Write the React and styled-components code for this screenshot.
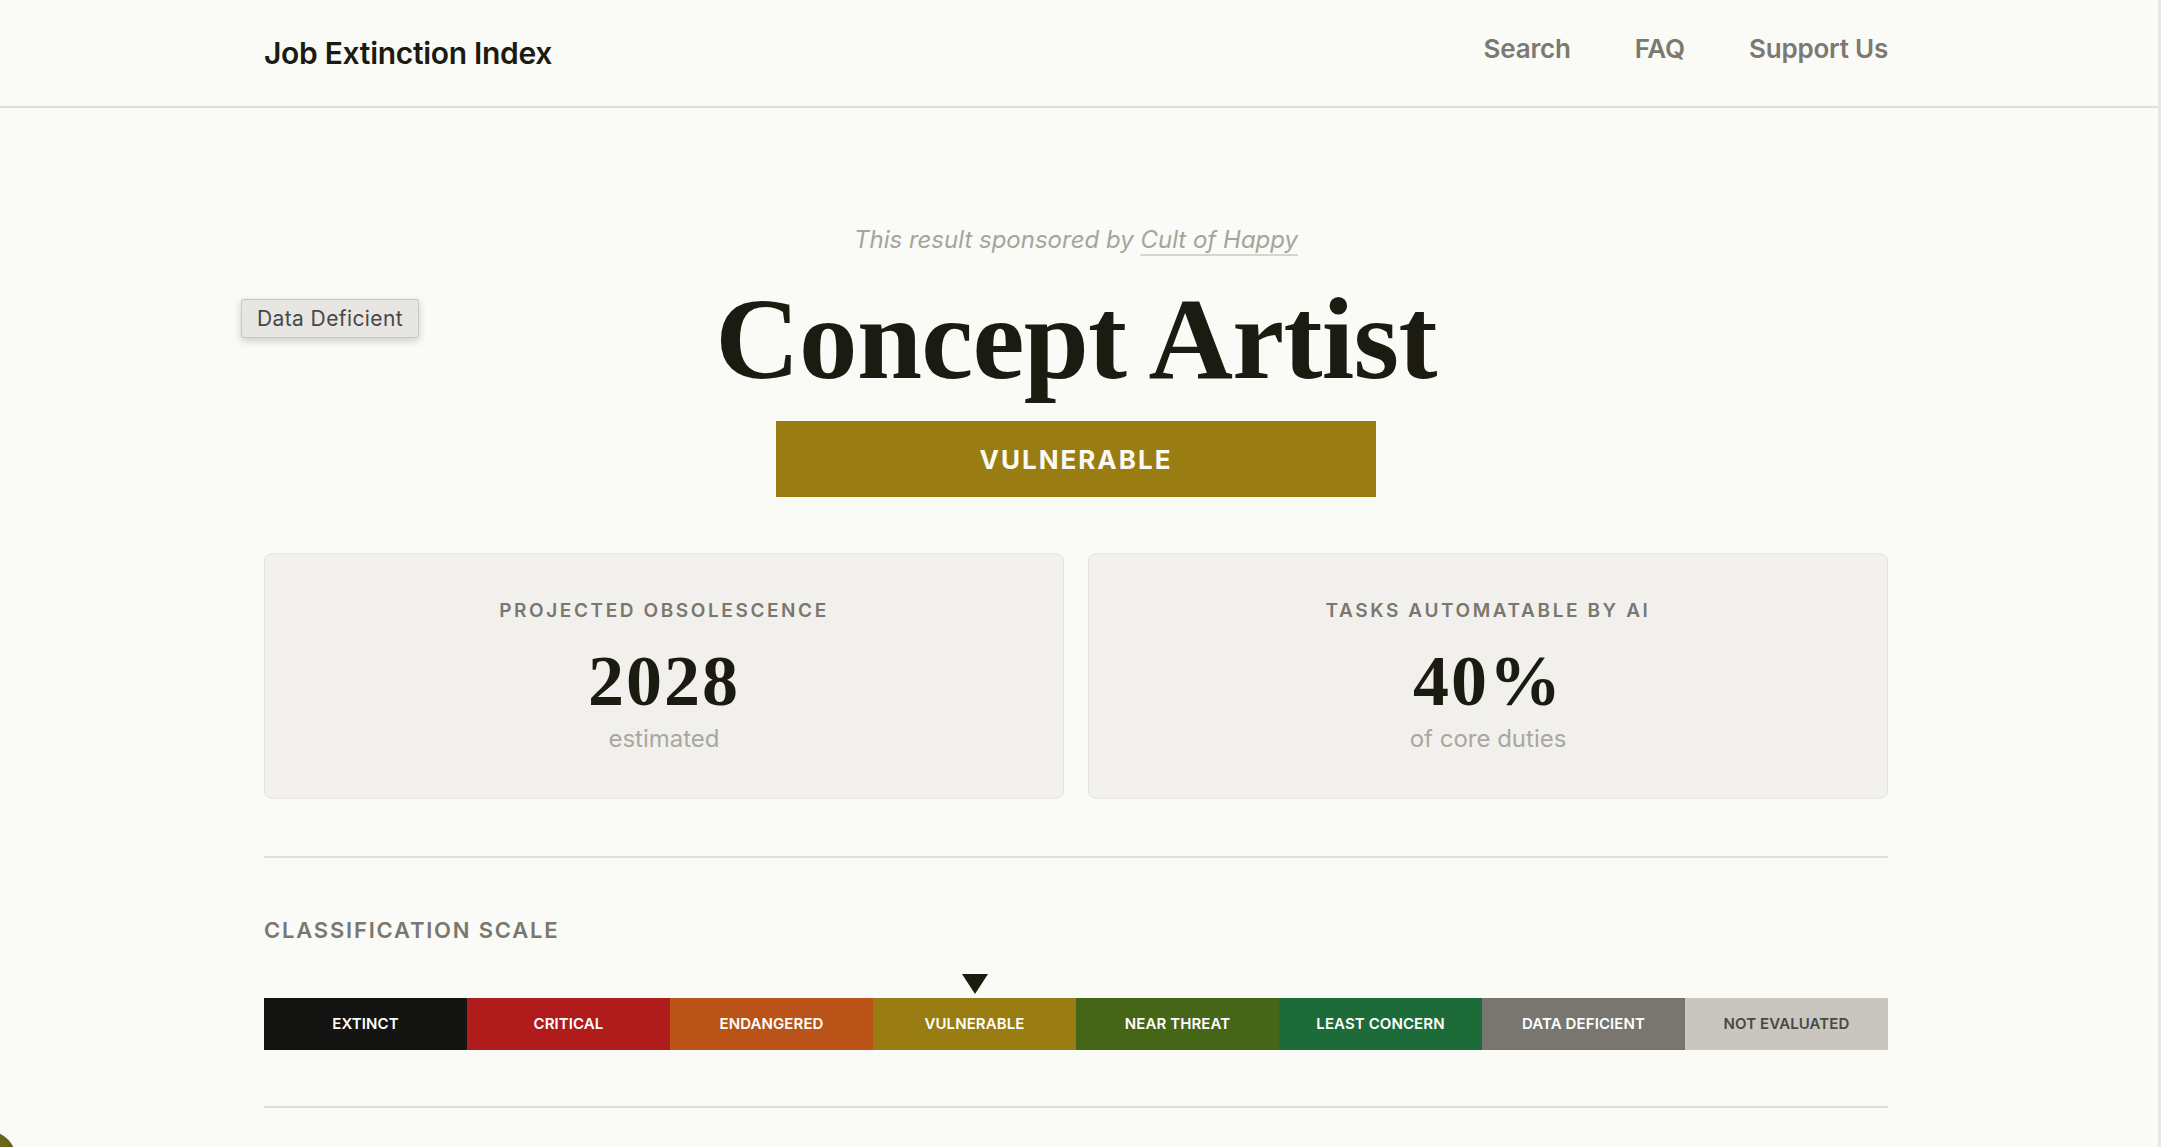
import React from 'react';
import styled, { createGlobalStyle } from 'styled-components';

const GlobalStyle = createGlobalStyle`
  html, body, #root {
    margin: 0;
    height: 100%;
  }
  body {
    background: #fafaf6;
    font-family: Inter, "Liberation Sans", sans-serif;
    color: #1b1b12;
    overflow: hidden;
  }
  * {
    box-sizing: border-box;
  }
`;

const Shell = styled.div`
  position: relative;
  display: flex;
  min-height: 100vh;
  overflow: hidden;
`;

const Page = styled.div`
  flex: 1;
  min-width: 0;
`;

const ScrollTrack = styled.div`
  width: 3px;
  background: #e8e7e3;
`;

const CornerBadge = styled.div`
  position: absolute;
  left: -40px;
  bottom: -40px;
  width: 56px;
  height: 56px;
  border-radius: 50%;
  background: radial-gradient(circle at 70% 30%, #6f6d1c, #3f4010);
`;

/* content column: 1624px wide, sitting a touch left of centre */
const Column = styled.div`
  max-width: 1630px;
  margin: 0 auto;
  padding-right: 6px;
`;

const Header = styled.header`
  border-bottom: 2px solid #e2ded8;
`;

const HeaderInner = styled(Column)`
  height: 106px;
  display: flex;
  align-items: center;
  justify-content: space-between;
`;

const Logo = styled.a`
  font-size: 30px;
  font-weight: 600;
  letter-spacing: -0.3px;
  color: #1b1b12;
  text-decoration: none;
`;

const Nav = styled.nav`
  display: flex;
  gap: 64px;
  margin-bottom: 9px;
`;

const NavLink = styled.a`
  font-size: 26px;
  font-weight: 600;
  letter-spacing: -0.2px;
  color: #7b7971;
  text-decoration: none;
`;

const Main = styled(Column)`
  position: relative;
  padding-top: 114px;
`;

const Tooltip = styled.div`
  position: absolute;
  top: 191px;
  left: -23px;
  padding: 0 15px;
  line-height: 37px;
  font-size: 21px;
  letter-spacing: 0.4px;
  color: #474745;
  background: #e7e6e3;
  border: 1px solid #cac8c3;
  border-radius: 2px;
  box-shadow: 0 3px 8px rgba(0, 0, 0, 0.18);
`;

const Sponsor = styled.p`
  margin: 0;
  text-align: center;
  font-size: 24px;
  line-height: 36px;
  font-style: italic;
  color: #a6a49c;

  a {
    color: inherit;
    text-decoration: underline;
    text-decoration-color: #d8d4ce;
    text-decoration-thickness: 2px;
    text-underline-offset: 6px;
  }
`;

const JobTitle = styled.h1`
  margin: 17px 0 0;
  text-align: center;
  font-family: "Liberation Serif", "DejaVu Serif", serif;
  font-weight: 700;
  font-size: 117px;
  line-height: 127px;
  letter-spacing: -0.7px;
  color: #1b1b12;
`;

const StatusBanner = styled.div`
  width: 600px;
  height: 76px;
  margin: 19px auto 0;
  display: flex;
  align-items: center;
  justify-content: center;
  background: ${p => p.$color};
  color: #fbfaf2;
  font-size: 26px;
  font-weight: 700;
  letter-spacing: 2px;
`;

const StatGrid = styled.div`
  display: grid;
  grid-template-columns: 1fr 1fr;
  gap: 24px;
  margin-top: 56px;
`;

const StatCard = styled.div`
  padding: 44px 24px 43px;
  text-align: center;
  background: #f1f0ec;
  border: 1px solid #e6e4df;
  border-radius: 8px;
`;

const StatLabel = styled.div`
  font-size: 19px;
  line-height: 26.6px;
  font-weight: 600;
  letter-spacing: 2.6px;
  text-transform: uppercase;
  color: #7a776f;
`;

const StatValue = styled.div`
  margin-top: 20px;
  font-family: "Liberation Serif", "DejaVu Serif", serif;
  font-weight: 700;
  font-size: 72px;
  line-height: 72px;
  letter-spacing: 2px;
  color: #1b1b12;
`;

const StatNote = styled.div`
  margin-top: 5px;
  font-size: 24px;
  line-height: 33.6px;
  color: #a9a79f;
`;

const Rule = styled.div`
  height: 2px;
  margin-top: ${p => p.$gap}px;
  background: #e2ded8;
`;

const SectionTitle = styled.h2`
  margin: 57px 0 0;
  font-size: 22px;
  line-height: 30.8px;
  font-weight: 600;
  letter-spacing: 1.8px;
  text-transform: uppercase;
  color: #7a776f;
`;

const ScaleRow = styled.div`
  display: grid;
  grid-template-columns: repeat(8, 1fr);
`;

const MarkerRow = styled(ScaleRow)`
  height: 20px;
  margin-top: 28px;
`;

const Marker = styled.div`
  grid-column: ${p => p.$col};
  justify-self: center;
  width: 0;
  height: 0;
  border-left: 13.5px solid transparent;
  border-right: 13.5px solid transparent;
  border-top: 20px solid #1b1b12;
`;

const ScaleBar = styled(ScaleRow)`
  height: 52px;
  margin-top: 4px;
`;

const Segment = styled.div`
  display: flex;
  align-items: center;
  justify-content: center;
  background: ${p => p.$bg};
  color: ${p => p.$fg};
  font-size: 15px;
  font-weight: 600;
  letter-spacing: 0.1px;
  text-transform: uppercase;
`;

const categories = [
  { name: 'Extinct', bg: '#141412', fg: '#ffffff' },
  { name: 'Critical', bg: '#b01c1c', fg: '#ffffff' },
  { name: 'Endangered', bg: '#ba5318', fg: '#ffffff' },
  { name: 'Vulnerable', bg: '#9a7d12', fg: '#ffffff' },
  { name: 'Near Threat', bg: '#466617', fg: '#ffffff' },
  { name: 'Least Concern', bg: '#1e6b3a', fg: '#ffffff' },
  { name: 'Data Deficient', bg: '#78766f', fg: '#ffffff' },
  { name: 'Not Evaluated', bg: '#c9c6bf', fg: '#4a4843' },
];

const stats = [
  { label: 'Projected Obsolescence', value: '2028', note: 'estimated' },
  { label: 'Tasks Automatable by AI', value: '40%', note: 'of core duties' },
];

const current = 'Vulnerable';

export default function App() {
  const currentIndex = categories.findIndex(c => c.name === current);
  const currentCat = categories[currentIndex];

  return (
    <>
      <GlobalStyle />
      <Shell>
        <Page>
          <Header>
            <HeaderInner>
              <Logo href="#">Job Extinction Index</Logo>
              <Nav>
                <NavLink href="#">Search</NavLink>
                <NavLink href="#">FAQ</NavLink>
                <NavLink href="#">Support Us</NavLink>
              </Nav>
            </HeaderInner>
          </Header>

          <Main>
            <Tooltip>Data Deficient</Tooltip>
            <Sponsor>
              This result sponsored by <a href="#">Cult of Happy</a>
            </Sponsor>
            <JobTitle>Concept Artist</JobTitle>
            <StatusBanner $color={currentCat.bg}>{current.toUpperCase()}</StatusBanner>

            <StatGrid>
              {stats.map(s => (
                <StatCard key={s.label}>
                  <StatLabel>{s.label}</StatLabel>
                  <StatValue>{s.value}</StatValue>
                  <StatNote>{s.note}</StatNote>
                </StatCard>
              ))}
            </StatGrid>

            <Rule $gap={57} />

            <SectionTitle>Classification Scale</SectionTitle>
            <MarkerRow>
              <Marker $col={currentIndex + 1} />
            </MarkerRow>
            <ScaleBar>
              {categories.map(c => (
                <Segment key={c.name} $bg={c.bg} $fg={c.fg}>
                  {c.name}
                </Segment>
              ))}
            </ScaleBar>

            <Rule $gap={56} />
          </Main>
        </Page>
        <ScrollTrack />
        <CornerBadge />
      </Shell>
    </>
  );
}
